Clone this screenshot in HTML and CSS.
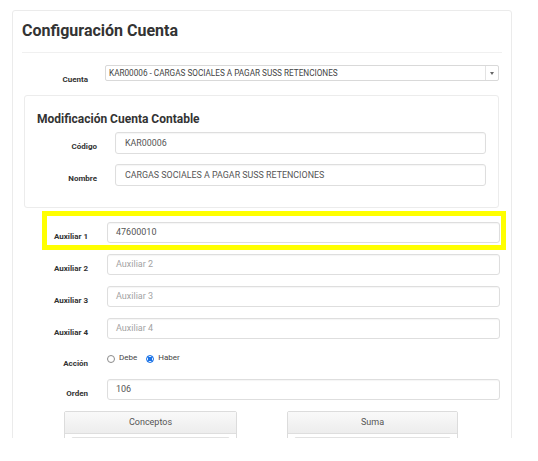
FILE: index.html
```html
<!DOCTYPE html>
<html lang="es">
<head>
<meta charset="utf-8">
<title>Configuración Cuenta</title>
<link rel="stylesheet" href="styles.css">
</head>
<body>
<div class="viewport">
  <div class="card">
    <div class="card-head">
      <h1 class="title">Configuración Cuenta</h1>
    </div>

    <div class="row row-select">
      <label class="lbl">Cuenta</label>
      <div class="select">
        <span class="select-text">KAR00006 - CARGAS SOCIALES A PAGAR SUSS RETENCIONES</span>
        <span class="select-arrow"><span class="caret"></span></span>
      </div>
    </div>

    <div class="subcard">
      <h2 class="subtitle">Modificación Cuenta Contable</h2>
      <div class="row row-sub">
        <label class="lbl">Código</label>
        <div class="input input-sub">KAR00006</div>
      </div>
      <div class="row row-sub gap10">
        <label class="lbl">Nombre</label>
        <div class="input input-sub">CARGAS SOCIALES A PAGAR SUSS RETENCIONES</div>
      </div>
    </div>

    <div class="row row-aux first">
      <span class="highlight"></span>
      <label class="lbl">Auxiliar 1</label>
      <div class="input">47600010</div>
    </div>
    <div class="row row-aux">
      <label class="lbl">Auxiliar 2</label>
      <div class="input placeholder">Auxiliar 2</div>
    </div>
    <div class="row row-aux">
      <label class="lbl">Auxiliar 3</label>
      <div class="input placeholder">Auxiliar 3</div>
    </div>
    <div class="row row-aux">
      <label class="lbl">Auxiliar 4</label>
      <div class="input placeholder">Auxiliar 4</div>
    </div>

    <div class="row row-radio">
      <label class="lbl lbl-radio">Acción</label>
      <div class="radios">
        <span class="radio"></span><span class="radio-text">Debe</span>
        <span class="radio checked"></span><span class="radio-text">Haber</span>
      </div>
    </div>

    <div class="row row-aux orden">
      <label class="lbl">Orden</label>
      <div class="input">106</div>
    </div>

    <div class="panels">
      <div class="panel panel-left">
        <div class="panel-head">Conceptos</div>
        <div class="panel-body"><div class="panel-inner"></div></div>
      </div>
      <div class="panel panel-right">
        <div class="panel-head">Suma</div>
        <div class="panel-body"><div class="panel-inner"></div></div>
      </div>
    </div>
  </div>
</div>
</body>
</html>
```

FILE: styles.css
```css
* { box-sizing: border-box; }

html, body {
  margin: 0;
  padding: 0;
  background: #ffffff;
  font-family: Roboto, "Liberation Sans", Arial, sans-serif;
  color: #333333;
}

.viewport {
  height: 438px;
  overflow: hidden;
  padding-top: 10px;
}

.card {
  margin-left: 12px;
  width: 500px;
  height: 470px;
  border: 1px solid #ebebeb;
  border-radius: 3px;
  padding: 0 9px;
  background: #ffffff;
}

.card-head {
  padding: 10px 0 11px;
  border-bottom: 1px solid #f0f0f0;
}

.title {
  margin: 0;
  font-size: 16px;
  line-height: 20px;
  font-weight: 700;
  color: #333333;
}

.row {
  display: grid;
  position: relative;
}

.lbl {
  font-size: 8px;
  line-height: 11px;
  font-weight: 700;
  color: #333333;
  text-align: right;
  padding-top: 9px;
  white-space: nowrap;
}

.row-select {
  grid-template-columns: 66px 1fr;
  column-gap: 17px;
  margin: 12px 3px 0 0;
  height: 16px;
}

.select {
  display: flex;
  height: 16px;
  border: 1px solid #d9d9d9;
  border-radius: 2px;
  background: #ffffff;
}

.select-text {
  flex: 1;
  font-size: 8.2px;
  line-height: 14px;
  padding-left: 3px;
  color: #444444;
  white-space: nowrap;
  overflow: hidden;
}

.select-arrow {
  width: 13px;
  border-left: 1px solid #e3e3e3;
  display: flex;
  align-items: center;
  justify-content: center;
}

.caret {
  width: 0;
  height: 0;
  border-left: 2.5px solid transparent;
  border-right: 2.5px solid transparent;
  border-top: 3px solid #666666;
}

.subcard {
  margin: 14px 3px 0 2px;
  border: 1px solid #ececec;
  border-radius: 3px;
  padding: 16px 12px 21px;
}

.subtitle {
  margin: 0;
  font-size: 12px;
  line-height: 14px;
  font-weight: 700;
  color: #333333;
}

.row-sub {
  grid-template-columns: 60px 1fr;
  column-gap: 18px;
  margin-top: 6px;
  height: 22px;
}

.row-sub.gap10 { margin-top: 10px; }

.input {
  height: 21px;
  border: 1px solid #dedede;
  border-radius: 3px;
  background: #ffffff;
  box-shadow: inset 0 1px 1px rgba(0, 0, 0, 0.04);
  font-size: 9px;
  line-height: 19px;
  padding-left: 8px;
  color: #555555;
  white-space: nowrap;
  overflow: hidden;
}

.input-sub {
  height: 22px;
  line-height: 20px;
  font-size: 8.9px;
  padding-left: 9px;
}

.placeholder { color: #a3a3a3; }

.row-aux {
  grid-template-columns: 66px 1fr;
  column-gap: 19px;
  margin: 11px 2px 0 0;
  height: 21px;
}

.row-aux.first { margin-top: 14px; }
.row-aux.orden { margin-top: 12px; }

.highlight {
  position: absolute;
  top: -11px;
  left: 20px;
  right: -6px;
  bottom: -7px;
  border: 5px solid #ffff00;
  pointer-events: none;
}

.row-radio {
  grid-template-columns: 66px 1fr;
  column-gap: 19px;
  margin: 12px 2px 0 0;
  height: 16px;
}

.lbl-radio { padding-top: 7px; }

.radios {
  display: flex;
  align-items: center;
  height: 16px;
}

.radio {
  width: 8px;
  height: 8px;
  border-radius: 50%;
  border: 1px solid #8a8a8a;
  background: #ffffff;
  flex: none;
}

.radio.checked {
  border-color: #1a73e8;
  background: radial-gradient(circle, #1a73e8 0 2.2px, #ffffff 2.4px 2.8px, #1a73e8 3px);
}

.radio-text {
  font-size: 8px;
  line-height: 10px;
  color: #444444;
  margin: -3px 9px 0 4px;
}

.panels {
  display: flex;
  gap: 50px;
  margin: 11px 0 0 42px;
}

.panel {
  border: 1px solid #dcdcdc;
  border-radius: 2px;
  height: 40px;
}

.panel-left { width: 173px; }
.panel-right { width: 171px; }

.panel-head {
  height: 22px;
  border-bottom: 1px solid #dedede;
  background: linear-gradient(#f9f9f9, #ededed);
  font-size: 9px;
  line-height: 21px;
  text-align: center;
  color: #555555;
}

.panel-body {
  padding: 3px 6px 0;
}

.panel-inner {
  height: 14px;
  border: 1px solid #e2e2e2;
  border-radius: 2px;
}
```
